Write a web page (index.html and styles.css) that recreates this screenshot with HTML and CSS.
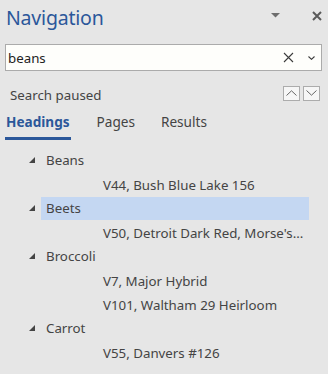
FILE: index.html
```html
<!DOCTYPE html>
<html lang="en">
<head>
  <meta charset="UTF-8">
  <title>Navigation</title>
  <link rel="stylesheet" href="styles.css">
</head>
<body>
  <div class="pane">

    <!-- Title bar -->
    <div class="titlebar">
      <h1>Navigation</h1>
      <svg class="menu-arrow" width="9" height="5" viewBox="0 0 9 5"><polygon points="0,0 9,0 4.5,4.5" fill="#6d6d6d"/></svg>
      <svg class="close" width="10" height="10" viewBox="0 0 10 10"><path d="M1 1 L9 9 M9 1 L1 9" stroke="#5a5a5a" stroke-width="2"/></svg>
    </div>

    <!-- Search box -->
    <div class="search">
      <span class="search-text">beans</span>
      <svg class="clear" width="11" height="11" viewBox="0 0 11 11"><path d="M1 1 L10 10 M10 1 L1 10" stroke="#3c3c3c" stroke-width="1.1"/></svg>
      <svg class="drop" width="7" height="4" viewBox="0 0 7 4"><path d="M0.5 0.5 L3.5 3.3 L6.5 0.5" stroke="#3c3c3c" stroke-width="1.1" fill="none"/></svg>
    </div>

    <!-- Status -->
    <div class="status">
      <span>Search paused</span>
      <div class="stepper">
        <button class="step"><svg width="11" height="6" viewBox="0 0 11 6"><path d="M0.5 5.5 L5.5 0.8 L10.5 5.5" stroke="#666" stroke-width="1" fill="none"/></svg></button>
        <button class="step"><svg width="11" height="6" viewBox="0 0 11 6"><path d="M0.5 0.5 L5.5 5.2 L10.5 0.5" stroke="#666" stroke-width="1" fill="none"/></svg></button>
      </div>
    </div>

    <!-- Tabs -->
    <div class="tabs">
      <span class="tab active">Headings</span>
      <span class="tab">Pages</span>
      <span class="tab">Results</span>
    </div>

    <!-- Heading tree -->
    <ul class="tree">
      <li class="node"><svg class="twisty" width="6" height="6" viewBox="0 0 6 6"><polygon points="6,0 6,6 0,6" fill="#444"/></svg><span class="label">Beans</span></li>
      <li class="leaf"><span class="label">V44, Bush Blue Lake 156</span></li>
      <li class="node selected"><svg class="twisty" width="6" height="6" viewBox="0 0 6 6"><polygon points="6,0 6,6 0,6" fill="#444"/></svg><span class="label">Beets</span></li>
      <li class="leaf"><span class="label">V50, Detroit Dark Red, Morse's...</span></li>
      <li class="node"><svg class="twisty" width="6" height="6" viewBox="0 0 6 6"><polygon points="6,0 6,6 0,6" fill="#444"/></svg><span class="label">Broccoli</span></li>
      <li class="leaf"><span class="label">V7, Major Hybrid</span></li>
      <li class="leaf"><span class="label">V101, Waltham 29 Heirloom</span></li>
      <li class="node"><svg class="twisty" width="6" height="6" viewBox="0 0 6 6"><polygon points="6,0 6,6 0,6" fill="#444"/></svg><span class="label">Carrot</span></li>
      <li class="leaf"><span class="label">V55, Danvers #126</span></li>
    </ul>

  </div>
</body>
</html>
```

FILE: styles.css
```css
/* Reset & base */
* { margin: 0; padding: 0; box-sizing: border-box; }
body { background: #e6e6e6; font-family: "Noto Sans", "Open Sans", sans-serif; color: #444; }
.pane { width: 328px; height: 374px; overflow: hidden; }

/* Title bar */
.titlebar { display: flex; align-items: center; height: 34px; padding: 0 6px; }
.titlebar h1 { font-size: 19.5px; font-weight: 400; color: #2b579a; flex: 1; letter-spacing: -0.2px; }
.menu-arrow { margin-right: 32px; margin-top: -3px; }
.close { margin-top: -3px; }

/* Search box */
.search {
  display: flex;
  align-items: center;
  width: 317px;
  height: 27px;
  margin: 10px 0 0 5px;
  border: 1px solid #ababab;
  background: #fefefb;
  padding: 0 6px 0 2px;
}
.search-text { flex: 1; font-size: 13.3px; color: #222; }
.clear { margin-right: 14px; }

/* Status row */
.status { display: flex; align-items: center; justify-content: space-between; height: 30px; margin-top: 9px; padding: 0 8px 0 10px; }
.status span { font-size: 13.3px; color: #444; }
.stepper { display: flex; gap: 3px; margin-top: -4px; }
.step {
  width: 17px;
  height: 15px;
  border: 1px solid #acacac;
  background: #f6f6f6;
  display: flex;
  align-items: center;
  justify-content: center;
}

/* Tabs */
.tabs { display: flex; gap: 26px; padding: 2px 0 0 5px; height: 39px; }
.tab { font-size: 13.6px; color: #444; }
.tab.active { font-weight: 700; color: #2b579a; border-bottom: 3px solid #2b579a; height: 28px; padding: 0 1px; }

/* Tree */
.tree { list-style: none; }
.tree li { display: flex; align-items: center; height: 23px; margin-bottom: 1px; font-size: 13.3px; color: #444; }
.node { padding-left: 29px; }
.node .twisty { margin-right: 6px; margin-top: -1px; }
.node .label { padding-left: 5px; width: 268px; height: 23px; line-height: 23px; }
.node.selected .label { background: #c4d7f2; }
.leaf { padding-left: 103px; }
.leaf .label { white-space: nowrap; }
```
